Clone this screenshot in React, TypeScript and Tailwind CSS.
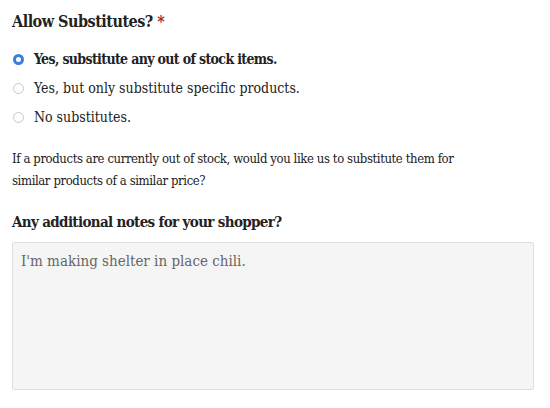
import React from "react";

const font = { fontFamily: '"DejaVu Serif Condensed", "DejaVu Serif", serif' };

function Radio({ checked }: { checked?: boolean }) {
  return checked ? (
    <span className="inline-block w-[11px] h-[11px] rounded-full border-[3px] border-[#3b7ddd] bg-white shrink-0" />
  ) : (
    <span className="inline-block w-[11px] h-[11px] rounded-full border border-[#c8c8c8] bg-white shrink-0" />
  );
}

export default function App() {
  return (
    <div className="w-[550px] h-[408px] bg-white text-[#222] px-[12px] pt-[10px]" style={font}>
      <h2 className="text-[16px] font-bold leading-[24px] tracking-[-0.5px] text-[#222]">
        Allow Substitutes? <span className="text-[#a3242b]">*</span>
      </h2>
      <div className="mt-[11px] flex flex-col">
        <label className="flex items-center h-[29px] gap-[10px] pl-[1px] text-[14px] font-bold tracking-[-0.65px]">
          <Radio checked />
          <span>Yes, substitute any out of stock items.</span>
        </label>
        <label className="flex items-center h-[29px] gap-[10px] pl-[1px] text-[14px]">
          <Radio />
          <span>Yes, but only substitute specific products.</span>
        </label>
        <label className="flex items-center h-[29px] gap-[10px] pl-[1px] text-[14px]">
          <Radio />
          <span>No substitutes.</span>
        </label>
      </div>
      <p className="mt-[16px] text-[13px] leading-[22px] tracking-[-0.4px] w-[470px]">
        If a products are currently out of stock, would you like us to substitute them for similar products of a similar price?
      </p>
      <h2 className="mt-[18px] text-[15px] font-bold leading-[24px] tracking-[-0.65px]">Any additional notes for your shopper?</h2>
      <div className="mt-[8px] w-[522px] h-[148px] bg-[#f5f5f5] border border-[#dedede] rounded-[2px] px-[8px] pt-[5px] text-[15px] text-[#666] leading-[26px]">
        I'm making shelter in place chili.
      </div>
    </div>
  );
}
